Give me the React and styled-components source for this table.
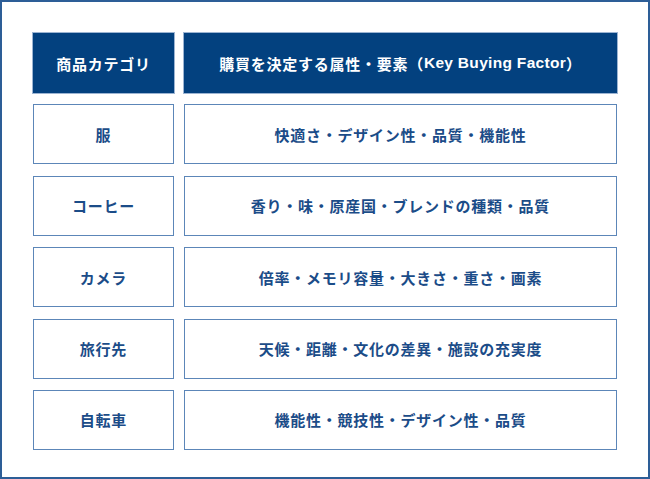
import React from "react";
import styled, { createGlobalStyle } from "styled-components";

const rows = [
  ["服", "快適さ・デザイン性・品質・機能性"],
  ["コーヒー", "香り・味・原産国・ブレンドの種類・品質"],
  ["カメラ", "倍率・メモリ容量・大きさ・重さ・画素"],
  ["旅行先", "天候・距離・文化の差異・施設の充実度"],
  ["自転車", "機能性・競技性・デザイン性・品質"],
];

const App = () => {
  return (
    <>
      <GlobalStyle />
      <Frame>
        <Table>
          <HeadCell>商品カテゴリ</HeadCell>
          <HeadCell>
            購買を決定する属性・要素（<Latin>Key Buying Factor</Latin>）
          </HeadCell>
          {rows.map(([category, factors]) => (
            <React.Fragment key={category}>
              <Cell>{category}</Cell>
              <Cell>{factors}</Cell>
            </React.Fragment>
          ))}
        </Table>
      </Frame>
    </>
  );
};

export default App;

const GlobalStyle = createGlobalStyle`
  html, body {
    margin: 0;
    padding: 0;
    background: #fff;
  }
  body {
    font-family: "Noto Sans CJK JP", "Noto Sans", sans-serif;
  }
`;

const Frame = styled.div`
  box-sizing: border-box;
  width: 650px;
  height: 479px;
  border: 2px solid #2d5e97;
  padding: 31px 0 0 31px;
  background: #fff;
`;

const Table = styled.div`
  display: grid;
  grid-template-columns: 141px 433px;
  grid-auto-rows: 60px;
  column-gap: 10px;
  row-gap: 11.4px;
`;

const HeadCell = styled.div`
  display: flex;
  align-items: center;
  justify-content: center;
  background: #03417f;
  color: #fff;
  font-size: 15px;
  font-weight: 700;
  letter-spacing: 0.05em;
  box-shadow: 0 0 0 1px #9cb4d2;
`;

const Latin = styled.span`
  font-family: "Liberation Sans", "Noto Sans", sans-serif;
  font-size: 15.5px;
  letter-spacing: 0.02em;
`;

const Cell = styled.div`
  box-sizing: border-box;
  display: flex;
  align-items: center;
  justify-content: center;
  border: 1.5px solid #5c86b8;
  color: #1b4c88;
  font-size: 15px;
  font-weight: 700;
  letter-spacing: 0.05em;
`;
